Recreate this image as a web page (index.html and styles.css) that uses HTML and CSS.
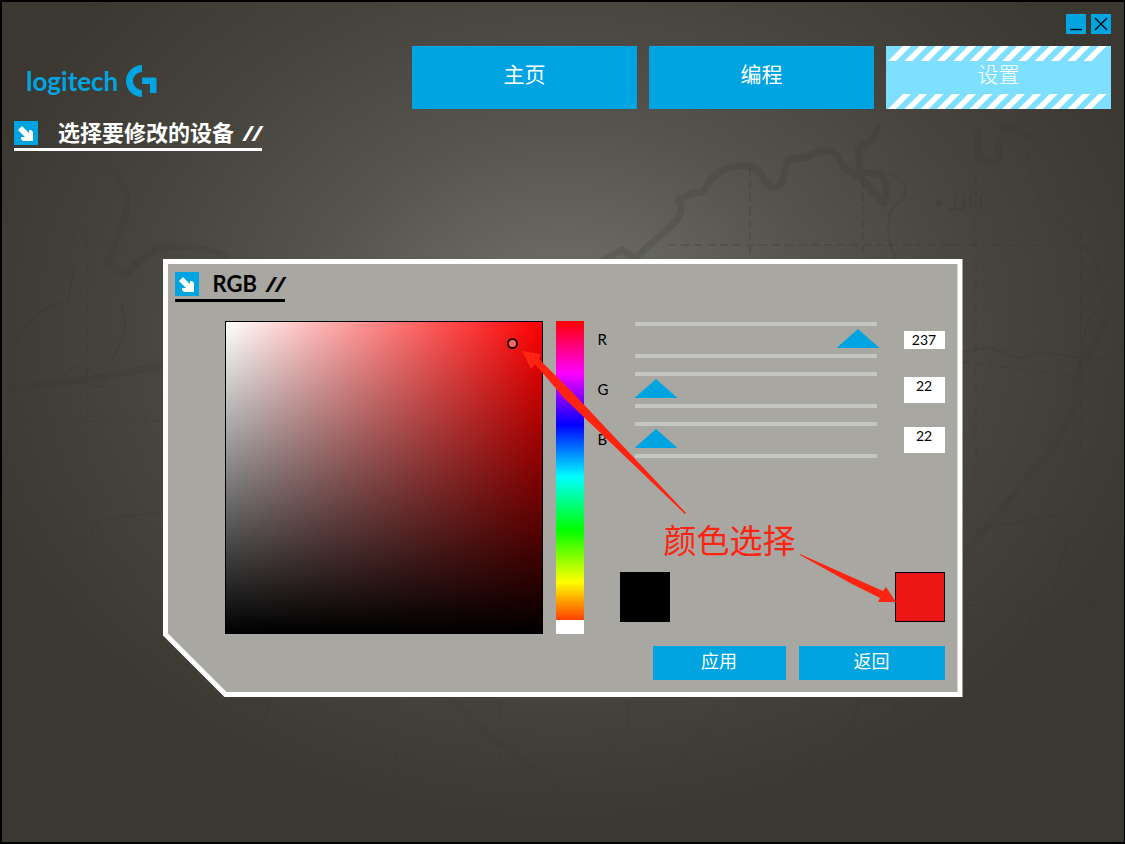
FILE: index.html
```
<!DOCTYPE html>
<html lang="zh-CN">
<head>
    <meta charset="UTF-8">
    <meta name="viewport" content="width=device-width, initial-scale=1.0">
    <title>Logitech G</title>
    <link rel="stylesheet" href="styles.css">
</head>
<body>
    <!-- Faint map behind everything -->
    <svg class="map" viewBox="0 0 1125 844" preserveAspectRatio="xMidYMid slice" aria-hidden="true">
        <g class="map-road">
            <path d="M600 262 L622 250 L635 258 L670 227 Q687 212 678 200 Q692 192 702 192 Q708 186 712 178 Q728 164 745 166 Q758 166 763 178 Q775 196 783 180 Q784 168 788 160 L806 157 Q826 145 838 156 Q842 168 850 172 Q862 176 868 186 L884 203 Q890 184 880 174 L860 172 L858 148 L872 140 L880 124"/>
            <path d="M1000 128 Q1020 126 1032 140 M978 130 L978 160 L998 162 L998 138"/>
            <path d="M108 165 Q135 190 124 220 L107 262 L125 276 Q143 250 170 247 Q205 245 230 258"/>
            <path d="M10 388 L70 382 L165 366"/>
            <path d="M1112 310 Q1080 370 1075 380 Q1085 400 1050 450 L962 557"/>
            <path d="M450 698 L475 723 L560 790"/>
        </g>
        <g class="map-line">
            <path d="M884 172 Q912 180 904 196 L890 212 Q885 240 896 259"/>
            <path d="M1028 150 Q1030 190 1044 205 L1080 243 Q1100 260 1098 280 L1107 295 L1086 325 L1078 380"/>
            <path d="M962 352 L990 347 L1020 358 L1040 352 L1095 360 L1125 350"/>
            <path d="M75 264 L68 300 Q30 310 14 345"/>
            <path d="M122 305 L126 330 L112 360"/>
            <path d="M65 375 Q75 360 98 375 T90 385"/>
            <path d="M976 530 L1055 515 L1068 535 L1052 600"/>
            <path d="M962 605 L1035 605 L1020 660 M1038 610 L1100 606"/>
            <path d="M628 700 L628 730 L610 752 L610 790 M720 700 L710 725 L680 755 L680 790"/>
            <path d="M860 700 Q850 740 810 765 L780 775 M900 700 L875 740"/>
            <path d="M70 542 L90 538 L98 520 L160 512 M270 700 L252 755"/>
        </g>
        <g class="map-grid">
            <path d="M668 245 H1090 M750 168 V259 M863 180 V259 M976 175 V480 M1081 180 V480"/>
            <path d="M87 225 V560 M10 421 H162 M395 700 V780 M500 700 V780 M962 362 L1110 380 M965 617 H1100"/>
        </g>
        <circle class="map-dot" cx="939" cy="203" r="3"/>
        <text class="map-text" x="949" y="210">JJH</text>
        <text class="map-text map-text-dim" x="66" y="248">323</text>
    </svg>

    <div class="window">
        <div class="window-buttons">
            <button type="button" class="window-button" aria-label="最小化">
                <svg viewBox="0 0 20 20"><path d="M4 15.5 H16"/></svg>
            </button>
            <button type="button" class="window-button" aria-label="关闭">
                <svg viewBox="0 0 20 20"><path d="M4 4 L16 16 M16 4 L4 16"/></svg>
            </button>
        </div>

        <header class="header">
            <div class="logo">
                <span class="logo-text">logitech</span>
                <svg class="logo-mark" viewBox="0 0 32 32">
                    <path d="M17 0 A16 16 0 0 0 17 32 V25 A9 9 0 0 1 17 7 Z"/>
                    <path d="M17 12.5 H31.5 V28 H25 V19 H17 Z"/>
                </svg>
            </div>
            <nav class="tabs">
                <button type="button" class="tab">主页</button>
                <button type="button" class="tab">编程</button>
                <button type="button" class="tab tab-active">
                    <svg class="stripes" viewBox="0 0 225 63" preserveAspectRatio="none" aria-hidden="true">
                        <g transform="translate(17 0) skewX(-45)"><line x1="0" y1="7.5" x2="205" y2="7.5"/></g>
                        <g transform="translate(17 48) skewX(-45)"><line x1="0" y1="7.5" x2="205" y2="7.5"/></g>
                    </svg>
                    <span class="tab-label">设置</span>
                </button>
            </nav>
        </header>

        <main>
            <h1 class="heading">
                <svg class="heading-icon" viewBox="0 0 24 24">
                    <rect width="24" height="24"/>
                    <path d="M8 5 L15 12 V9 H17 L19 11 V20 H9 L7 18 V16 H11 L4 9 Z"/>
                </svg>
                <span>选择要修改的设备 <span class="slashes">//</span></span>
            </h1>

            <section class="panel">
                <div class="panel-body">
                    <h2 class="heading heading-dark">
                        <svg class="heading-icon" viewBox="0 0 24 24">
                            <rect width="24" height="24"/>
                            <path d="M8 5 L15 12 V9 H17 L19 11 V20 H9 L7 18 V16 H11 L4 9 Z"/>
                        </svg>
                        <span>RGB <span class="slashes">//</span></span>
                    </h2>

                    <div class="picker">
                        <div class="shade">
                            <span class="shade-cursor"></span>
                        </div>
                        <div class="hue"></div>

                        <div class="controls">
                            <div class="channel">
                                <label for="red">R</label>
                                <div class="track"><input type="range" id="red" min="22" max="237" value="237"></div>
                                <input type="text" class="value value-short" value="237" aria-label="R">
                            </div>
                            <div class="channel">
                                <label for="green">G</label>
                                <div class="track"><input type="range" id="green" min="22" max="237" value="22"></div>
                                <input type="text" class="value" value="22" aria-label="G">
                            </div>
                            <div class="channel">
                                <label for="blue">B</label>
                                <div class="track"><input type="range" id="blue" min="22" max="237" value="22"></div>
                                <input type="text" class="value" value="22" aria-label="B">
                            </div>

                            <div class="swatches">
                                <div class="swatch swatch-old"></div>
                                <div class="swatch swatch-new"></div>
                            </div>
                        </div>
                    </div>

                    <div class="actions">
                        <button type="button" class="action">应用</button>
                        <button type="button" class="action action-wide">返回</button>
                    </div>

                    <!-- Callout pointing at the cursor and the new colour -->
                    <svg class="callout-arrows" viewBox="0 0 790 428" aria-hidden="true">
                        <path d="M354 87 L373 90 L371 95 L405 129 L518 249 L517 250 L396 134 L367 100 L363 105 Z"/>
                        <path d="M632 290 L715 327 L718 323 L728 338 L710 338 L712 334 L684 320 L632 291 Z"/>
                    </svg>
                    <span class="callout">颜色选择</span>
                </div>
            </section>
        </main>
    </div>
</body>
</html>
```
FILE: styles.css
```
* {
    box-sizing: border-box;
}

body {
    margin: 0;
    font-family: Lato, "Noto Sans CJK SC", sans-serif;
    background: radial-gradient(ellipse 620px 500px at 50% 330px, #706f6a 0%, #686762 16%, #55534d 42%, #47443d 70%, #3b3832 100%);
    background-color: #3b3832;
}

button {
    border: 0;
    padding: 0;
    background-color: #00a4e0;
    color: #fff;
    font-family: inherit;
    cursor: pointer;
}

.map {
    position: absolute;
    top: 0;
    left: 0;
    width: 100%;
    height: 100%;
    fill: none;
    stroke: #38352f;
    stroke-linejoin: round;
}

.map-road {
    stroke-width: 7;
    opacity: 0.2;
}

.map-line {
    stroke-width: 2;
    opacity: 0.22;
}

.map-grid {
    stroke-width: 2;
    stroke-dasharray: 8 5;
    opacity: 0.22;
}

.map-dot {
    fill: #38352f;
    stroke: none;
    opacity: 0.3;
}

.map-text {
    font-size: 22px;
    fill: #38352f;
    stroke: none;
    opacity: 0.3;
}

.map-text-dim {
    opacity: 0.15;
}

.window {
    position: relative;
    min-height: 100vh;
    padding: 12px 13px 14px 12px;
    border: 2px solid #000;
    border-right-width: 1px;
}

.window-buttons {
    display: flex;
    justify-content: flex-end;
    gap: 5px;
}

.window-button {
    width: 20px;
    height: 20px;
}

.window-button svg {
    display: block;
    stroke: #000;
    stroke-width: 1.3;
}

.header {
    display: flex;
    justify-content: space-between;
    align-items: flex-start;
    margin-top: 12px;
}

.logo {
    display: flex;
    align-items: center;
    gap: 7px;
    margin: 19px 0 0 12px;
    color: #00a4e0;
}

.logo-text {
    font-size: 26px;
    font-weight: 700;
    line-height: 32px;
}

.logo-mark {
    width: 32px;
    height: 32px;
    fill: currentColor;
}

.tabs {
    display: flex;
    gap: 12px;
}

.tab {
    position: relative;
    width: 225px;
    height: 63px;
    padding-bottom: 10px;
    font-size: 21px;
}

.tab-active {
    background-color: #7fdfff;
    font-weight: 300;
}

.tab-label {
    position: relative;
}

.stripes {
    position: absolute;
    top: 0;
    left: 0;
    width: 100%;
    height: 100%;
    stroke: #fff;
    stroke-width: 15;
    stroke-dasharray: 8 8.3;
}

.heading {
    display: flex;
    align-items: center;
    gap: 20px;
    width: max-content;
    margin: 0;
    padding-bottom: 3px;
    border-bottom: 3px solid #fff;
    color: #fff;
    font-size: 22px;
    font-weight: 700;
    line-height: 24px;
}

h1.heading {
    margin-top: 12px;
}

.heading-dark {
    margin-left: 7px;
    gap: 14px;
    border-color: #000;
    color: #000;
}

.slashes {
    margin-left: 4px;
    font-family: "Open Sans", sans-serif;
    font-style: italic;
    line-height: 0;
}

.heading-icon {
    width: 24px;
    height: 24px;
    fill: #fff;
}

.heading-icon rect {
    fill: #00a4e0;
}

/* White outer shape and grey inner shape, both with the lower left corner cut */
.panel {
    width: 800px;
    max-width: 100%;
    margin: 108px auto 0;
    padding: 5px;
    background-color: #fff;
    clip-path: polygon(0 0, 100% 0, 100% 100%, 62px 100%, 0 calc(100% - 62px));
}

.panel-body {
    position: relative;
    padding: 8px 13px 12px 0;
    background-color: #a8a7a1;
    clip-path: polygon(0 0, 100% 0, 100% 100%, 59px 100%, 0 calc(100% - 59px));
}

.picker {
    display: flex;
    margin: 19px 0 0 57px;
}

.shade {
    position: relative;
    width: 318px;
    height: 313px;
    border: 1px solid #000;
    background: linear-gradient(to bottom, transparent, #000), linear-gradient(to right, #fff, #f00);
}

.shade-cursor {
    position: absolute;
    top: 16px;
    right: 24px;
    width: 11px;
    height: 11px;
    border: 2px solid #200;
    border-radius: 50%;
    background-color: #f66;
}

.hue {
    width: 28px;
    margin: 0 14px 0 13px;
    border-bottom: 14px solid #fff;
    background: linear-gradient(to bottom, #f00 0, #f0f 52px, #00f 104px, #0ff 156px, #0f0 209px, #ff0 261px, #ff4000 299px);
}

.controls {
    display: flex;
    flex: 1;
    flex-direction: column;
    gap: 14px;
    padding: 1px 0 12px;
}

.channel {
    display: flex;
    align-items: center;
    height: 36px;
    font-size: 15px;
}

.channel label {
    width: 37px;
    padding-bottom: 2px;
}

.track {
    width: 242px;
    border: solid #c5c5c2;
    border-width: 4px 0;
}

input[type="range"] {
    appearance: none;
    display: block;
    width: calc(100% + 3px);
    height: 28px;
    margin: 0;
    padding-bottom: 3px;
    background: none;
}

input[type="range"]::-webkit-slider-thumb {
    appearance: none;
    width: 43px;
    height: 19px;
    background-color: #00a4e0;
    clip-path: polygon(50% 0, 100% 100%, 0 100%);
}

.value {
    width: 41px;
    height: 26px;
    margin-left: auto;
    padding: 0 0 10px;
    border: 0;
    background-color: #fff;
    font-family: inherit;
    font-size: 14px;
    text-align: center;
}

.value-short {
    height: 18px;
    padding-bottom: 2px;
}

.swatches {
    display: flex;
    justify-content: space-between;
    margin: auto 0 0 22px;
}

.swatch {
    width: 50px;
    height: 50px;
    border: 1px solid #000;
}

.swatch-old {
    background-color: #000;
}

.swatch-new {
    background-color: #ed1616;
}

.actions {
    display: flex;
    justify-content: flex-end;
    gap: 13px;
    margin-top: 12px;
}

.action {
    width: 133px;
    height: 34px;
    padding-bottom: 6px;
    font-size: 18px;
}

.action-wide {
    width: 146px;
}

.callout-arrows {
    position: absolute;
    top: 0;
    left: 0;
    width: 790px;
    height: 428px;
    fill: #ff2312;
    pointer-events: none;
}

.callout {
    position: absolute;
    top: 256px;
    left: 496px;
    color: #ff2312;
    font-size: 33px;
    line-height: 40px;
}
```
